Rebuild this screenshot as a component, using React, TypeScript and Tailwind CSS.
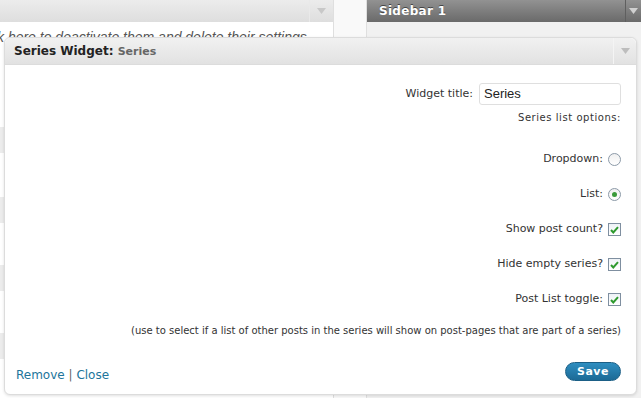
import React from 'react';

const Arrow = ({ color = '#b5b5b5' }: { color?: string }) => (
  <svg width="9" height="6" viewBox="0 0 9 6">
    <path d="M0 0h9L4.5 6z" fill={color} />
  </svg>
);

const Radio = ({ checked }: { checked?: boolean }) => (
  <span className="w-[13px] h-[13px] rounded-full border border-[#8c9aa8] bg-gradient-to-b from-[#f0f0f0] to-[#ffffff] flex items-center justify-center">
    {checked && <span className="w-[5px] h-[5px] rounded-full bg-[#3a9a3a]" />}
  </span>
);

const Check = () => (
  <span className="w-[13px] h-[13px] border border-[#7f8fa0] bg-gradient-to-b from-[#eef2f6] to-[#ffffff] flex items-center justify-center">
    <svg width="9" height="8" viewBox="0 0 9 8">
      <path d="M1 4l2.3 2.5L8 1.2" stroke="#2e9a2e" strokeWidth="2" fill="none" />
    </svg>
  </span>
);

const options = [
  { label: 'Dropdown:', ctrl: <Radio /> },
  { label: 'List:', ctrl: <Radio checked /> },
  { label: 'Show post count?', ctrl: <Check /> },
  { label: 'Hide empty series?', ctrl: <Check /> },
  { label: 'Post List toggle:', ctrl: <Check /> },
];

export default function App() {
  return (
    <div className="relative w-[641px] h-[398px] overflow-hidden bg-[#f1f1f1] font-['DejaVu_Sans',sans-serif] text-[#333]">
      {/* page behind */}
      <div className="flex h-full">
        <div className="w-[334px] bg-white border-r border-[#dfdfdf] flex flex-col">
          <div className="h-[22px] bg-gradient-to-b from-[#ececec] to-[#dedede] flex justify-end">
            <div className="w-[24px] border-l border-[#e9e9e9] flex items-center justify-center">
              <Arrow color="#c8c8c8" />
            </div>
          </div>
          <div className="h-[38px] pt-[5px] font-['Liberation_Sans',sans-serif] italic text-[14px] text-[#555] whitespace-nowrap -ml-[3px]">
            k here to deactivate them and delete their settings
          </div>
          <div className="h-[67px]" />
          <div className="h-[26px] bg-[#ececec]" />
          <div className="h-[44px]" />
          <div className="h-[26px] bg-[#ececec]" />
          <div className="h-[42px]" />
          <div className="h-[26px] bg-[#ececec]" />
          <div className="h-[42px]" />
          <div className="h-[26px] bg-[#ececec]" />
        </div>
        <div className="w-[33px] bg-[#f9f9f9] border-r border-[#dfdfdf]" />
        <div className="flex-1 flex flex-col">
          <div className="h-[22px] bg-gradient-to-b from-[#929292] to-[#6a6a6a] flex items-center justify-between">
            <span className="pl-[12px] text-white font-bold text-[12px] tracking-[0.3px] [text-shadow:0_-1px_0_#444]">Sidebar 1</span>
            <div className="w-[16px] h-full border-l border-[#5f5f5f] flex items-center justify-center">
              <Arrow color="#d0d0d0" />
            </div>
          </div>
        </div>
      </div>

      {/* dragged widget */}
      <div className="absolute left-[4px] top-[37px] w-[633px] h-[358px] bg-white rounded-[6px] border border-[#dcdcdc] shadow-[0_1px_3px_rgba(0,0,0,0.12)] flex flex-col">
        <div className="h-[27px] rounded-t-[6px] bg-gradient-to-b from-[#f1f1f1] to-[#e2e2e2] border-b border-[#dcdcdc] flex items-center justify-between">
          <div className="pl-[9px] font-bold text-[12px] text-[#222]">
            Series Widget<span>:</span> <span className="text-[11px] text-[#666]">Series</span>
          </div>
          <div className="w-[23px] h-full border-l border-[#f4f4f4] flex items-center justify-center">
            <Arrow color="#bdbdbd" />
          </div>
        </div>

        <div className="flex-1 pr-[15px] pl-[11px] pt-[18px] flex flex-col items-end text-[11px]">
          <div className="h-[22px] flex items-center gap-[6px]">
            <span>Widget title:</span>
            <div className="w-[142px] h-[22px] border border-[#dfdfdf] rounded-[3px] px-[4px] flex items-center font-['Liberation_Sans',sans-serif] text-[13px] text-[#222]">
              Series
            </div>
          </div>
          <div className="mt-[6px] h-[14px] leading-[14px] text-[10px] tracking-[0.55px]">Series list options:</div>
          <div className="mt-[17px] flex flex-col items-end">
            {options.map((o) => (
              <div key={o.label} className="h-[35px] flex items-center gap-[5px]">
                <span>{o.label}</span>
                {o.ctrl}
              </div>
            ))}
          </div>
          <div className="mt-[7px] h-[14px] leading-[14px] text-[10px] whitespace-nowrap">
            (use to select if a list of other posts in the series will show on post-pages that are part of a series)
          </div>
          <div className="mt-[24px] w-full flex justify-between items-start">
            <div className="mt-[4px] text-[12px] text-[#21759b]">
              Remove <span className="text-[#666]">|</span> Close
            </div>
            <button className="w-[56px] h-[19px] rounded-full bg-gradient-to-b from-[#2e8ec0] to-[#1c6a96] border border-[#1b5f86] text-white font-bold text-[11px] tracking-[0.5px] leading-none">
              Save
            </button>
          </div>
        </div>
      </div>
    </div>
  );
}
